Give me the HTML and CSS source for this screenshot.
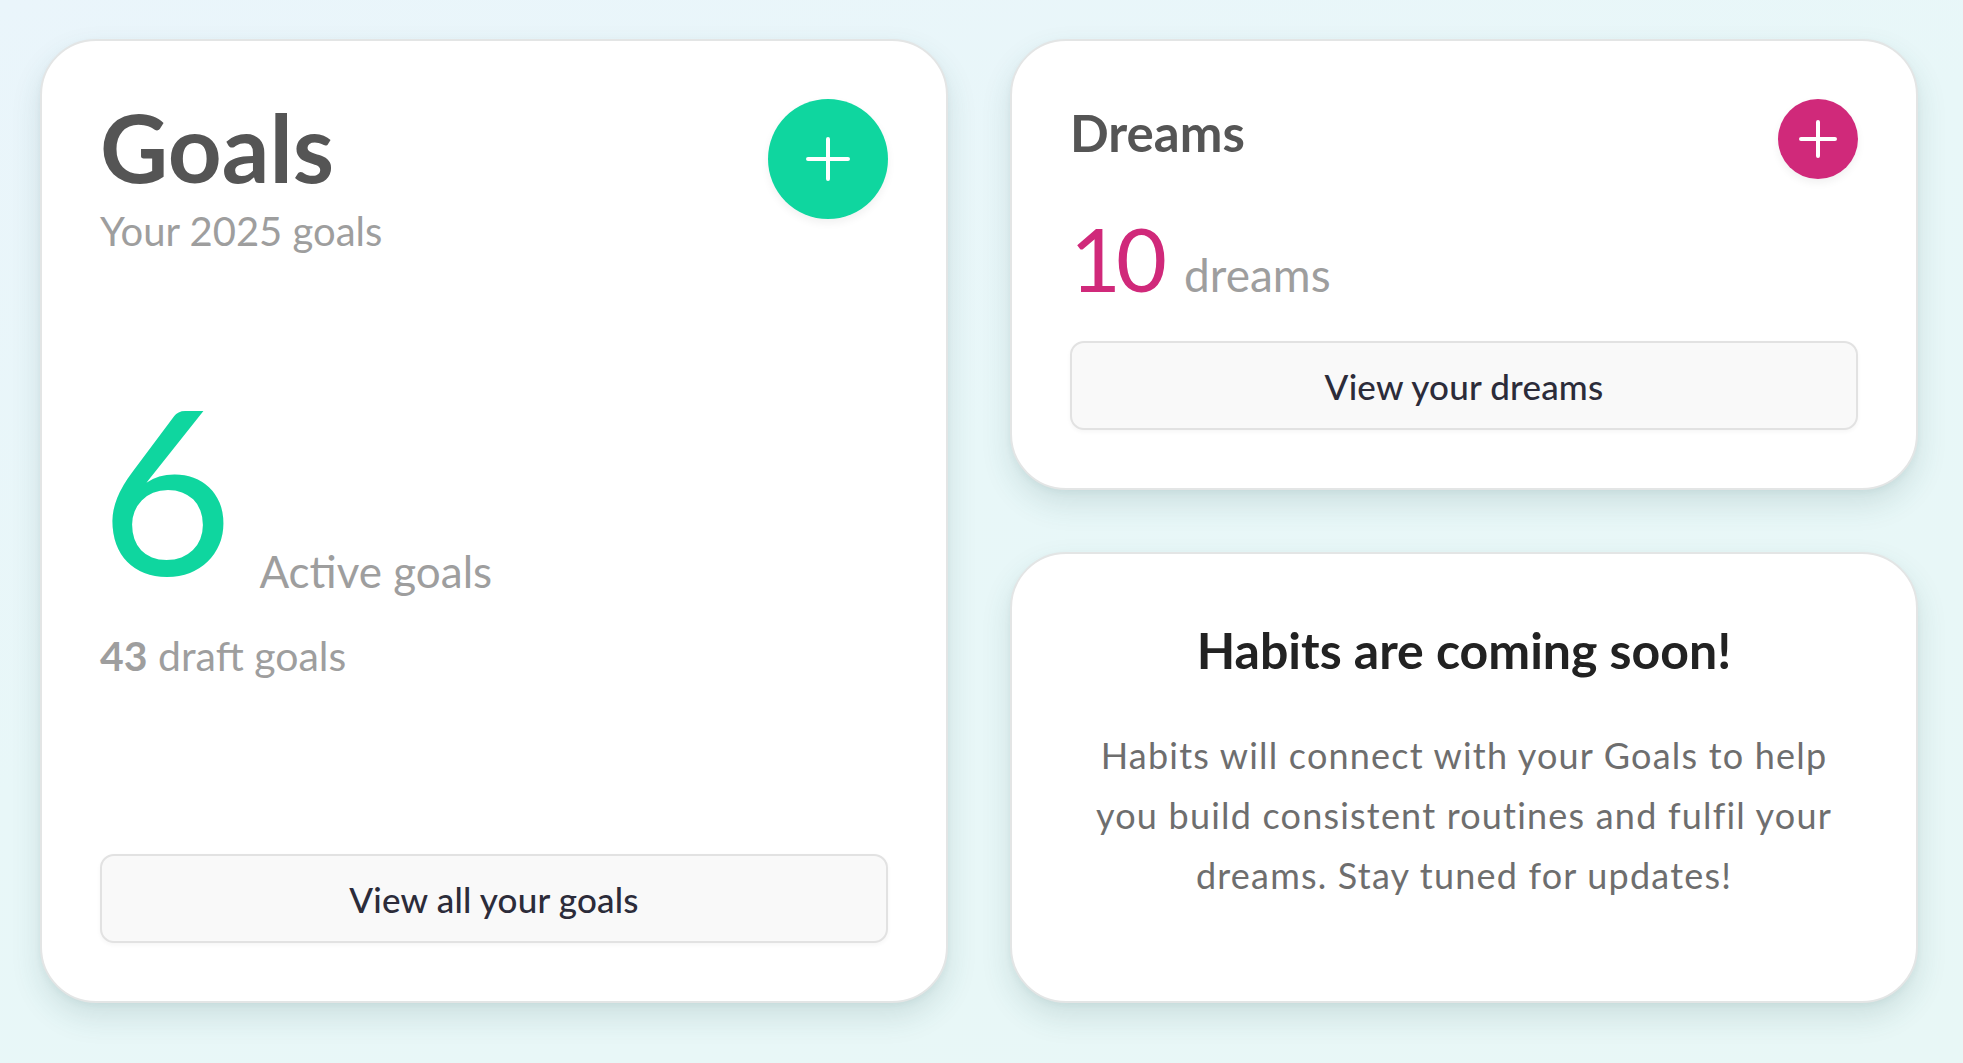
FILE: index.html
```html
<!DOCTYPE html>
<html lang="en">
<head>
<meta charset="utf-8">
<title>Dashboard</title>
<link rel="stylesheet" href="styles.css">
</head>
<body>
<main class="dashboard">
  <section class="card card-goals">
    <header class="card-head">
      <div class="head-text">
        <h1 class="goals-title">Goals</h1>
        <p class="goals-sub">Your 2025 goals</p>
      </div>
      <button class="add add-lg add-green" aria-label="Add goal">
        <svg viewBox="0 0 44 44" width="44" height="44"><path d="M22 2v40M2 22h40" /></svg>
      </button>
    </header>
    <div class="active">
      <span class="active-num">6</span>
      <span class="active-label">Active goals</span>
    </div>
    <p class="draft"><strong>43</strong> draft goals</p>
    <button class="btn">View all your goals</button>
  </section>

  <section class="card card-dreams">
    <header class="card-head">
      <h2 class="dreams-title">Dreams</h2>
      <button class="add add-sm add-pink" aria-label="Add dream">
        <svg viewBox="0 0 38 38" width="38" height="38"><path d="M19 2v34M2 19h34" /></svg>
      </button>
    </header>
    <div class="dream-count">
      <span class="dream-num">10</span>
      <span class="dream-label">dreams</span>
    </div>
    <button class="btn">View your dreams</button>
  </section>

  <section class="card card-habits">
    <h2 class="habits-title">Habits are coming soon!</h2>
    <p class="habits-text">Habits will connect with your Goals to help you build consistent routines and fulfil your dreams. Stay tuned for updates!</p>
  </section>
</main>
</body>
</html>
```
FILE: styles.css
```css
* { box-sizing: border-box; }

html, body { height: 100%; }

body {
  margin: 0;
  font-family: Lato, "Noto Sans", sans-serif;
  background: linear-gradient(160deg, #eaf5fb 0%, #e8f7f8 45%, #e8f7f6 100%);
  color: #555;
}

.dashboard {
  display: grid;
  grid-template-columns: 908px 908px;
  grid-template-rows: 451px 451px;
  gap: 62px;
  padding: 39px 0 0 40px;
}

.card {
  background: #fff;
  border: 2px solid #e3e5e5;
  border-radius: 56px;
  padding: 58px;
  box-shadow: 0 14px 30px rgba(40, 90, 90, 0.14), 0 3px 6px rgba(40, 80, 80, 0.05);
  display: flex;
  flex-direction: column;
}

.card-goals { grid-row: 1 / 3; }

.card-head {
  display: flex;
  justify-content: space-between;
  align-items: flex-start;
}

.goals-title {
  margin: 2px 0 0;
  font-size: 94px;
  line-height: 92px;
  font-weight: 700;
  color: #555555;
}

.goals-sub {
  margin: 14px 0 0;
  font-size: 40px;
  line-height: 48px;
  color: #9e9e9e;
}

.add {
  border: none;
  border-radius: 50%;
  display: flex;
  align-items: center;
  justify-content: center;
  padding: 0;
  flex-shrink: 0;
  box-shadow: 0 4px 8px rgba(0, 0, 0, 0.06);
}

.add svg path {
  fill: none;
  stroke: #fff;
  stroke-width: 4;
  stroke-linecap: round;
}

.add-lg { width: 120px; height: 120px; }
.add-sm { width: 80px; height: 80px; }
.add-green { background: #0fd69f; }
.add-pink { background: #d0297a; }

.active {
  display: flex;
  align-items: flex-end;
  margin-top: 116px;
}

.active-num {
  font-size: 230px;
  line-height: 230px;
  font-weight: 400;
  color: #0fd69f;
}

.active-label {
  margin: 0 0 8px 26px;
  font-size: 44px;
  line-height: 44px;
  color: #9e9e9e;
}

.draft {
  margin: 31px 0 0;
  font-size: 41px;
  line-height: 48px;
  color: #9e9e9e;
}

.draft strong {
  font-weight: 700;
}

.btn {
  margin-top: auto;
  width: 100%;
  height: 89px;
  border: 2px solid #e2e2e2;
  border-radius: 14px;
  background: #f9f9f9;
  box-shadow: 0 2px 4px rgba(0, 0, 0, 0.04);
  font-family: inherit;
  font-size: 35px;
  font-weight: 500;
  letter-spacing: 0.2px;
  color: #2c2c3a;
}

.dreams-title {
  margin: 4px 0 0;
  font-size: 51px;
  line-height: 59px;
  font-weight: 700;
  color: #555555;
}

.dream-count {
  display: flex;
  align-items: baseline;
  margin-top: 35px;
}

.dream-num {
  font-size: 88px;
  line-height: 88px;
  letter-spacing: -5px;
  color: #d0297a;
}

.dream-label {
  margin-left: 22px;
  font-size: 46px;
  color: #9e9e9e;
}

.card-habits {
  align-items: center;
  text-align: center;
  padding-top: 67px;
}

.habits-title {
  margin: 0;
  font-size: 50px;
  line-height: 58px;
  font-weight: 700;
  color: #222;
}

.habits-text {
  margin: 46px 0 0;
  max-width: 765px;
  font-size: 36px;
  line-height: 60px;
  letter-spacing: 1.2px;
  color: #6e6e6e;
}
```
